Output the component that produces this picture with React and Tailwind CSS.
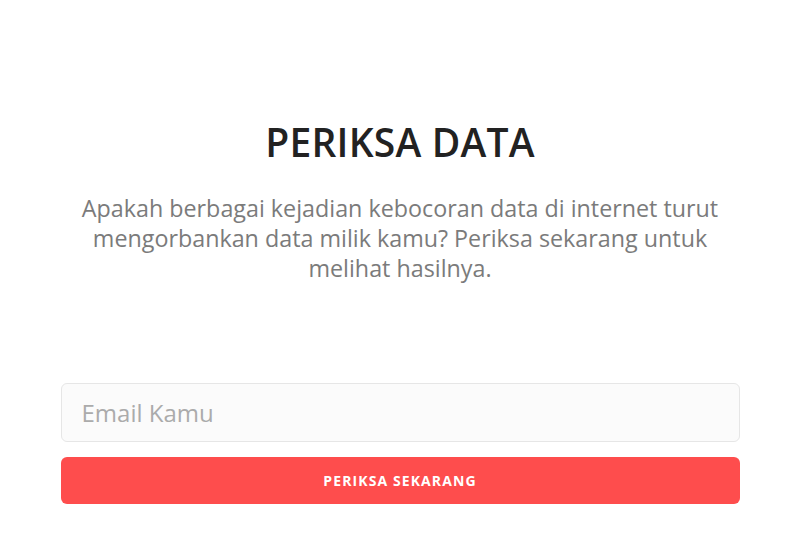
export default function App() {
  return (
    <div
      className="w-[800px] h-[540px] bg-white flex flex-col items-center"
      style={{ fontFamily: '"Open Sans", sans-serif' }}
    >
      <h1 className="mt-[117px] text-[39px] leading-[50px] font-semibold text-[#222222] tracking-[0.2px]">
        PERIKSA DATA
      </h1>
      <p className="mt-[26px] w-[680px] text-center text-[23.3px] leading-[30px] text-[#7b7b7b]">
        Apakah berbagai kejadian kebocoran data di internet turut mengorbankan data milik kamu? Periksa sekarang untuk melihat hasilnya.
      </p>
      <div className="mt-[100px] w-[679px] flex flex-col gap-[15px]">
        <input
          type="text"
          placeholder="Email Kamu"
          className="h-[59px] w-full rounded-[6px] border border-[#e6e6e6] bg-[#fbfbfb] px-[20px] text-[24px] text-[#555] placeholder:text-[#ababab] outline-none"
        />
        <button className="h-[47px] w-full rounded-[6px] bg-[#fe4d4d] text-white text-[14px] font-bold tracking-[1.1px]">
          PERIKSA SEKARANG
        </button>
      </div>
    </div>
  );
}
